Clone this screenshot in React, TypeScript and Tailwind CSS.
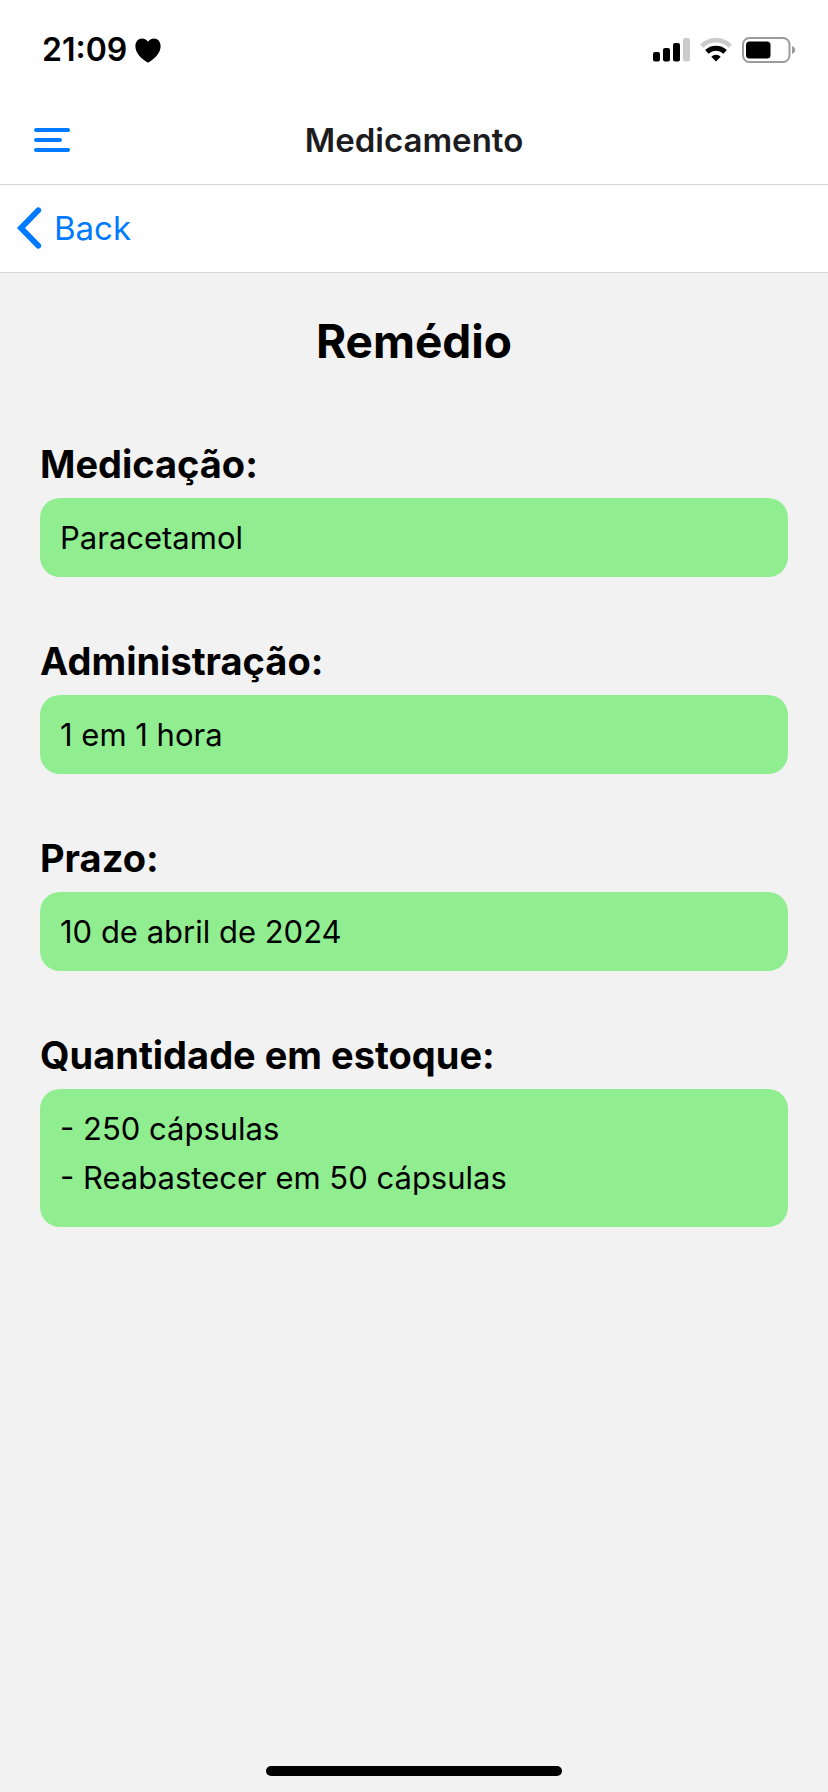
type Field = { label: string; lines: string[] };

const fields: Field[] = [
  { label: "Medicação:", lines: ["Paracetamol"] },
  { label: "Administração:", lines: ["1 em 1 hora"] },
  { label: "Prazo:", lines: ["10 de abril de 2024"] },
  {
    label: "Quantidade em estoque:",
    lines: ["- 250 cápsulas", "- Reabastecer em 50 cápsulas"],
  },
];

function Heart() {
  return (
    <svg width="26" height="25" viewBox="0 0 26 25" aria-hidden="true">
      <path
        d="M13 24.500C12.300 24.500 10.600 23.300 9.300 22.300 4 18.300 .4 13.600 .4 8 .4 3.600 3.200 .6 7 .6c2.700 0 4.800 1.300 6 3.200C14.200 1.900 16.300 .6 19 .6c3.800 0 6.600 3 6.600 7.400 0 5.600-3.600 10.300-8.900 14.300-1.300 1-3 2.200-3.700 2.200z"
        fill="#000"
      />
    </svg>
  );
}

function Signal() {
  return (
    <svg width="37" height="24" viewBox="0 0 37 24" aria-hidden="true">
      <rect x="0" y="14" width="7" height="9.500" rx="2" />
      <rect x="10" y="10" width="7" height="13.500" rx="2" />
      <rect x="20" y="5" width="7" height="18.500" rx="2" />
      <rect x="30" y="0" width="7" height="23.500" rx="2" fill="#cbcbcb" />
    </svg>
  );
}

function Wifi() {
  return (
    <svg width="32" height="24" viewBox="0 0 32 24" aria-hidden="true">
      <g fill="none" strokeWidth="4.600">
        <path d="M1.700 8.100a20.400 20.400 0 0 1 28.600 0" stroke="#cbcbcb" />
        <path d="M6.900 13.900a13 13 0 0 1 18.200 0" stroke="#000" strokeWidth="5" />
      </g>
      <path d="M16 23.500l-4.700-4.700a6.700 6.700 0 0 1 9.400 0z" />
    </svg>
  );
}

function Battery() {
  return (
    <svg width="54" height="26" viewBox="0 0 54 26" aria-hidden="true">
      <rect x="1" y="1" width="46.500" height="24" rx="6.500" fill="none" stroke="#9b9b9b" strokeWidth="2" />
      <rect x="4" y="4.500" width="24.500" height="17" rx="3.500" />
      <path d="M50 9c2 .7 3.200 2.300 3.200 4s-1.200 3.300-3.200 4z" fill="#9b9b9b" />
    </svg>
  );
}

export default function App() {
  return (
    <div className="flex min-h-screen flex-col bg-[#f2f2f2] font-['Inter',sans-serif] text-black">
      <div className="flex h-24 items-center justify-between bg-white pt-1 pr-8 pl-[42px]">
        <div className="flex items-center gap-2">
          <time className="text-[32px] leading-10 font-semibold">21:09</time>
          <Heart />
        </div>
        <div className="flex items-center gap-2.5">
          <Signal />
          <Wifi />
          <Battery />
        </div>
      </div>

      <header className="grid h-[89px] grid-cols-[1fr_auto_1fr] items-center border-b border-[#d8d8d8] bg-white px-8">
        <button type="button" aria-label="Menu" className="justify-self-start text-[#007aff]">
          <svg width="40" height="28" viewBox="0 0 40 28" fill="none" stroke="currentColor" strokeWidth="4" strokeLinecap="round">
            <path d="M4 4h32M4 14h24M4 24h32" />
          </svg>
        </button>
        <h1 className="text-[33px] leading-10 font-semibold text-[#1c1c1e]">Medicamento</h1>
      </header>

      <nav className="flex h-22 items-center border-b border-[#d8d8d8] bg-white px-4 pb-0.5">
        <a href="#medicamentos" className="flex items-center gap-3 text-[33px] leading-10 text-[#007aff]">
          <svg width="26" height="42" viewBox="0 0 26 42" fill="none" stroke="currentColor" strokeWidth="5.800" strokeLinecap="round" strokeLinejoin="miter" aria-hidden="true">
            <path d="M22.300 3.300L5 21l17.300 17.700" />
          </svg>
          Back
        </a>
      </nav>

      <main className="flex grow flex-col px-10 pt-[39px]">
        <h2 className="text-center text-[46px] leading-[58px] font-bold">Remédio</h2>
        <dl className="mt-17 flex flex-col gap-[58px]">
          {fields.map((field) => (
            <div key={field.label} className="flex flex-col gap-2">
              <dt className="text-[38px] leading-[52px] font-bold">{field.label}</dt>
              <dd className="rounded-[20px] bg-[#90ee90] p-5 text-[31px] leading-[39px]">
                {field.lines.length === 1 ? (
                  field.lines[0]
                ) : (
                  <ul className="flex flex-col gap-2.5 pb-2.5">
                    {field.lines.map((line) => (
                      <li key={line}>{line}</li>
                    ))}
                  </ul>
                )}
              </dd>
            </div>
          ))}
        </dl>
      </main>

      <div className="flex justify-center pb-4">
        <div className="h-2.5 w-74 rounded-full bg-black" />
      </div>
    </div>
  );
}
